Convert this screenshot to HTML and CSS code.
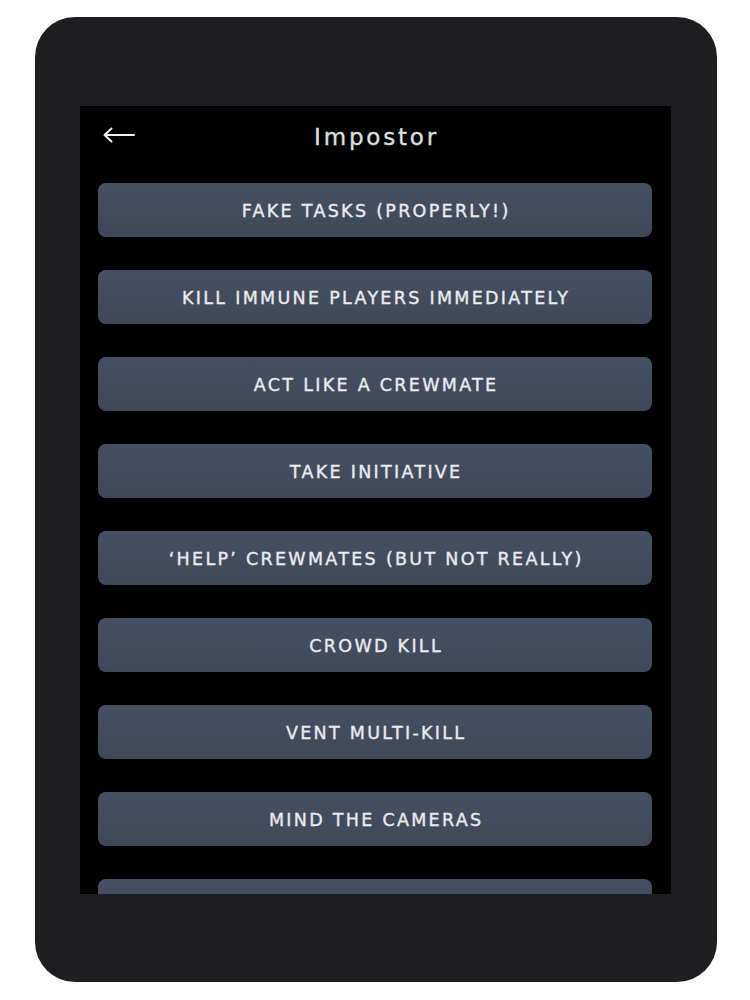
FILE: index.html
```html
<!DOCTYPE html>
<html>
<head>
<meta charset="utf-8">
<link rel="stylesheet" href="styles.css">
</head>
<body>
<div class="frame">
  <div class="screen">
    <div class="header">
      <svg class="back" width="32" height="16" viewBox="0 0 32 16">
        <path d="M1.5 8 H31 M8.5 1.5 L1.5 8 L8.5 14.5" fill="none" stroke="#f2f2f2" stroke-width="2" stroke-linecap="round" stroke-linejoin="round"/>
      </svg>
      <div class="title">Impostor</div>
    </div>
    <div class="list">
      <div class="btn">FAKE TASKS (PROPERLY!)</div>
      <div class="btn">KILL IMMUNE PLAYERS IMMEDIATELY</div>
      <div class="btn">ACT LIKE A CREWMATE</div>
      <div class="btn">TAKE INITIATIVE</div>
      <div class="btn">‘HELP’ CREWMATES (BUT NOT REALLY)</div>
      <div class="btn">CROWD KILL</div>
      <div class="btn">VENT MULTI-KILL</div>
      <div class="btn">MIND THE CAMERAS</div>
      <div class="btn"></div>
    </div>
  </div>
</div>
</body>
</html>
```
FILE: styles.css
```css
html, body {
  margin: 0;
  padding: 0;
  background: #ffffff;
}
.frame {
  margin: 17px 0 0 35px;
  width: 682px;
  height: 965px;
  box-sizing: border-box;
  padding: 89px 46px 88px 45px;
  background: #1e1d1f;
  border-radius: 40px;
}
.screen {
  height: 788px;
  background: #000000;
  overflow: hidden;
  padding: 0 19px 0 18px;
  box-sizing: border-box;
}
.header {
  position: relative;
  height: 77px;
  display: flex;
  align-items: center;
  justify-content: center;
  padding-bottom: 17px;
  box-sizing: border-box;
}
.back {
  position: absolute;
  left: 5px;
  top: 21px;
}
.title {
  font-family: "DejaVu Sans", sans-serif;
  font-size: 23px;
  letter-spacing: 2.8px;
  color: #dedede;
  -webkit-text-stroke: 0.4px #dedede;
  margin-top: 2px;
  margin-left: 3px;
}
.list {
  display: flex;
  flex-direction: column;
  gap: 33px;
}
.btn {
  height: 54px;
  flex: 0 0 54px;
  box-sizing: border-box;
  padding-top: 2px;
  border-radius: 8px;
  background: linear-gradient(#465064, #404858);
  display: flex;
  align-items: center;
  justify-content: center;
  font-family: "DejaVu Sans", sans-serif;
  font-size: 17.5px;
  letter-spacing: 2.3px;
  text-indent: 2.3px;
  color: #ececec;
  -webkit-text-stroke: 0.35px #ececec;
}
```
